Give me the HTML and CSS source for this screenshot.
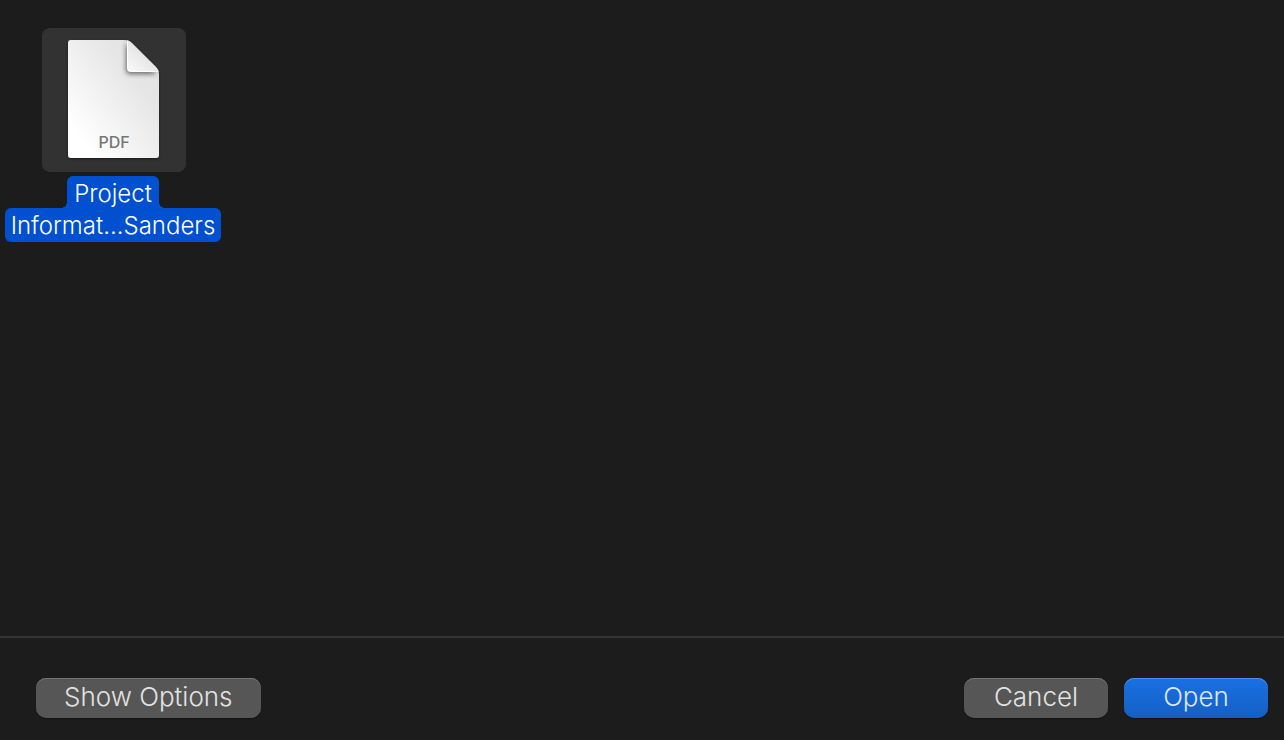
FILE: index.html
```html
<!DOCTYPE html>
<html lang="en">
<head>
    <meta charset="UTF-8">
    <meta name="viewport" content="width=device-width, initial-scale=1.0">
    <title>Open</title>
    <link rel="stylesheet" href="styles.css">
</head>
<body>
    <main class="files">
        <figure class="file selected">
            <div class="thumb">
                <svg class="doc" viewBox="0 0 104 128" aria-hidden="true">
                    <defs>
                        <linearGradient id="paper" x1="0" y1="1" x2="1" y2="0">
                            <stop offset="0.15" stop-color="#ffffff"/>
                            <stop offset="0.7" stop-color="#e6e6e6"/>
                            <stop offset="1" stop-color="#e0e0e0"/>
                        </linearGradient>
                        <linearGradient id="fold" x1="0" y1="1" x2="0.6" y2="0.3">
                            <stop offset="0" stop-color="#fafafa"/>
                            <stop offset="1" stop-color="#e0e0e0"/>
                        </linearGradient>
                        <filter id="foldShadow" x="-50%" y="-50%" width="200%" height="200%">
                            <feGaussianBlur stdDeviation="2.5"/>
                        </filter>
                        <filter id="paperShadow" x="-20%" y="-20%" width="140%" height="140%">
                            <feDropShadow dx="0" dy="1" stdDeviation="1.5" flood-color="#000000" flood-opacity="0.5"/>
                        </filter>
                        <clipPath id="page">
                            <path d="M9 4H62Q67 4 70 7L94 31Q97 34 97 38V119Q97 122 94 122H9Q6 122 6 119V7Q6 4 9 4Z"/>
                        </clipPath>
                    </defs>
                    <path d="M9 4H62Q67 4 70 7L94 31Q97 34 97 38V119Q97 122 94 122H9Q6 122 6 119V7Q6 4 9 4Z" fill="url(#paper)" filter="url(#paperShadow)"/>
                    <g clip-path="url(#page)">
                        <path d="M64 7V34Q64 38 68 38H95Z" fill="#000000" opacity="0.55" filter="url(#foldShadow)"/>
                        <path d="M65 3V32Q65 36 69 36H98Z" fill="#ffffff"/>
                        <path d="M66 4V32Q66 35 69 35H98Z" fill="url(#fold)"/>
                    </g>
                    <text x="52" y="112" text-anchor="middle" class="doc-type">PDF</text>
                </svg>
            </div>
            <figcaption class="name">
                <span class="line first">Project</span>
                <span class="line">Informat...Sanders</span>
            </figcaption>
        </figure>
    </main>

    <footer class="actions">
        <button type="button" class="options">Show Options</button>
        <button type="button">Cancel</button>
        <button type="button" class="primary">Open</button>
    </footer>
</body>
</html>
```
FILE: styles.css
```css
* {
    box-sizing: border-box;
}

body {
    display: flex;
    flex-direction: column;
    min-height: 100vh;
    margin: 0;
    background-color: #1c1c1c;
    color: #fff;
    font-family: Inter, "Liberation Sans", sans-serif;
    font-weight: 350;
}

.files {
    display: flex;
    flex: 1;
    flex-wrap: wrap;
    align-content: flex-start;
    padding: 28px 4px;
}

.file {
    display: flex;
    flex-direction: column;
    align-items: center;
    gap: 4px;
    width: 220px;
    margin: 0;
}

.thumb {
    display: flex;
    justify-content: center;
    padding: 8px;
    width: 144px;
    height: 144px;
    border-radius: 8px;
}

.selected .thumb {
    background-color: #323232;
}

.doc {
    width: 104px;
    height: 128px;
}

.doc-type {
    font-size: 16px;
    font-weight: 500;
    fill: #757575;
}

.name {
    display: flex;
    flex-direction: column;
    align-items: center;
    margin-right: 2px;
    font-size: 24px;
    line-height: 32px;
    white-space: nowrap;
}

.line {
    padding: 2px 6px 0;
    border-radius: 6px;
}

.selected .line {
    background-color: #0050cf;
}

.first {
    position: relative;
    height: 32px;
    padding: 2px 7px 0;
    border-radius: 6px 6px 0 0;
}

/* Rounded inner corners where the two lines meet */
.first::before,
.first::after {
    content: "";
    position: absolute;
    bottom: 0;
    width: 6px;
    height: 6px;
}

.first::before {
    right: 100%;
    background: radial-gradient(circle at 0 0, transparent 6px, #0050cf 6px);
}

.first::after {
    left: 100%;
    background: radial-gradient(circle at 100% 0, transparent 6px, #0050cf 6px);
}

.actions {
    display: flex;
    gap: 16px;
    padding: 40px 16px 22px 36px;
    border-top: 2px solid #343434;
}

button {
    min-width: 144px;
    height: 40px;
    padding: 0 28px 2px;
    border: none;
    border-radius: 10px;
    background-color: #565656;
    box-shadow: inset 0 1px 0 #737373, 0 1px 1px rgba(0, 0, 0, 0.4);
    color: #e3e3e3;
    font-family: inherit;
    font-size: 26px;
    font-weight: inherit;
    line-height: 38px;
}

.options {
    margin-right: auto;
}

.primary {
    background: linear-gradient(#1a70e5, #155fc3);
    box-shadow: inset 0 1px 0 #4a8fee, 0 1px 1px rgba(0, 0, 0, 0.4);
    color: #dce8fa;
}
```
